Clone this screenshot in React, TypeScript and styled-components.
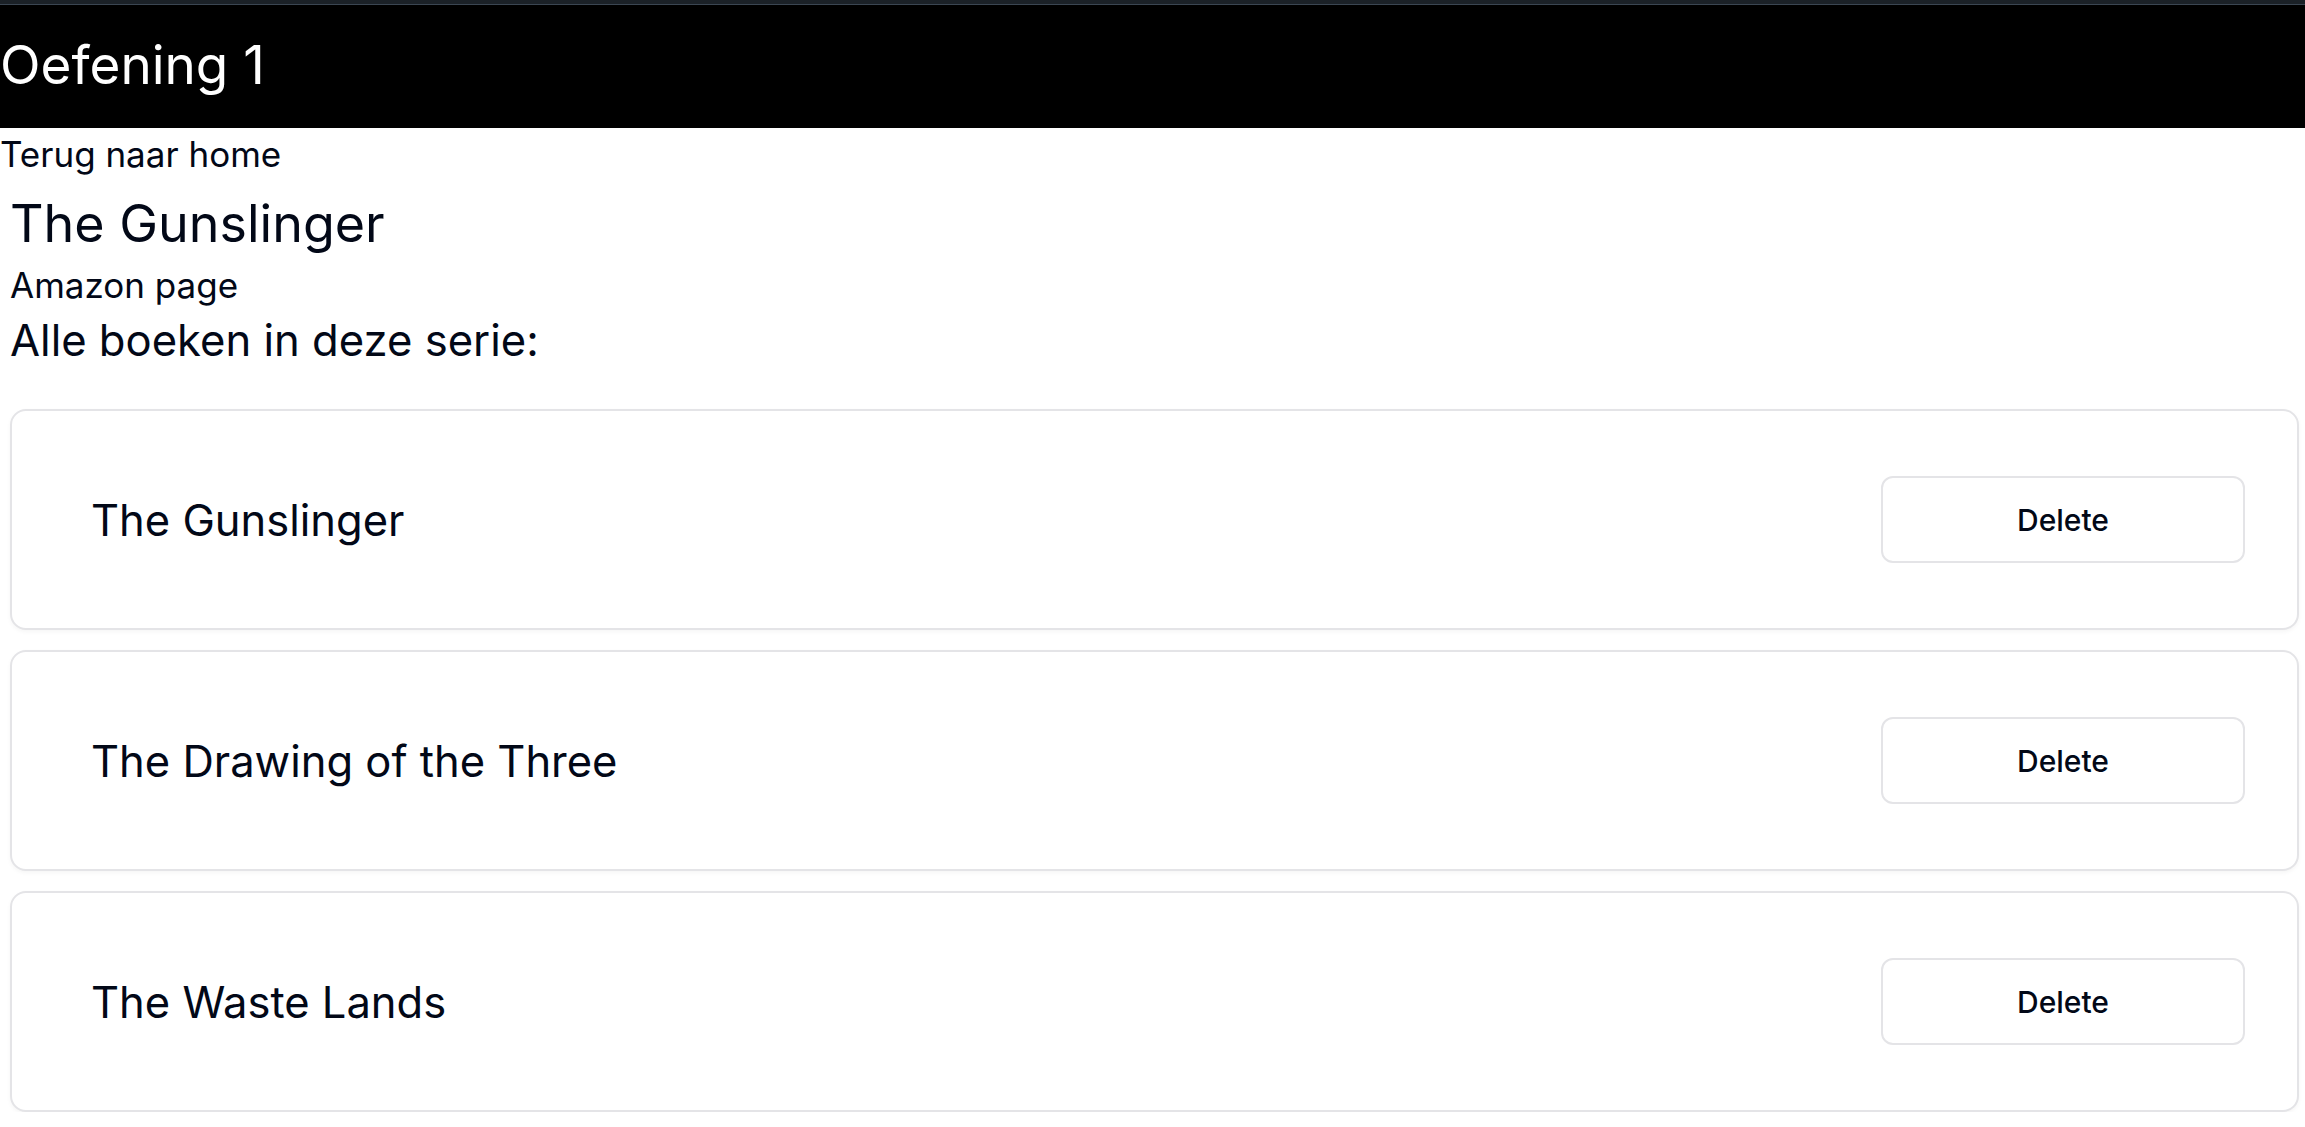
import React from 'react'
import styled, { createGlobalStyle } from 'styled-components'

const GlobalStyle = createGlobalStyle`
  html, body {
    margin: 0;
    padding: 0;
    background: #ffffff;
  }
  body {
    font-family: Inter, "Noto Sans", "Liberation Sans", sans-serif;
    color: #020817;
  }
  * {
    box-sizing: border-box;
  }
`

const TopStrip = styled.div`
  height: 5px;
  background: #1b2127;
  border-bottom: 1px solid #3b4652;
`

const Header = styled.header`
  height: 123px;
  background: #000000;
  display: flex;
  align-items: center;
`

const HeaderTitle = styled.h1`
  margin: 0;
  color: #ffffff;
  font-size: 53px;
  font-weight: 400;
  line-height: 1;
  padding-bottom: 2px;
`

const HomeLink = styled.a`
  display: block;
  font-size: 35px;
  line-height: 52px;
  color: #020817;
  text-decoration: none;
  cursor: pointer;
`

const Content = styled.main`
  padding: 0 6px 0 10px;
  display: flex;
  flex-direction: column;
`

const BookTitle = styled.h2`
  margin: 4px 0 0;
  font-size: 52px;
  font-weight: 400;
  line-height: 80px;
`

const AmazonLink = styled.a`
  font-size: 35px;
  line-height: 42px;
  color: #020817;
  text-decoration: none;
  cursor: pointer;
`

const SeriesHeading = styled.h3`
  margin: 0 0 33px;
  font-size: 43.6px;
  font-weight: 400;
  line-height: 70px;
`

const CardList = styled.div`
  display: flex;
  flex-direction: column;
  gap: 20px;
`

const Card = styled.div`
  height: 221px;
  border: 2px solid #e4e4e7;
  border-radius: 16px;
  background: #ffffff;
  box-shadow: 0 2px 4px rgba(0, 0, 0, 0.04);
  display: flex;
  align-items: center;
  justify-content: space-between;
  padding: 0 52px 0 79px;
`

const CardTitle = styled.span`
  font-size: 43.5px;
  font-weight: 400;
  color: #020817;
`

const DeleteButton = styled.button`
  width: 364px;
  height: 87px;
  border: 2px solid #e4e4e7;
  border-radius: 12px;
  background: #ffffff;
  font-family: Inter, "Noto Sans", "Liberation Sans", sans-serif;
  font-size: 30px;
  font-weight: 500;
  color: #020817;
  cursor: pointer;
`

const books = ['The Gunslinger', 'The Drawing of the Three', 'The Waste Lands']

const App = () => {
  return (
    <>
      <GlobalStyle />
      <TopStrip />
      <Header>
        <HeaderTitle>Oefening 1</HeaderTitle>
      </Header>
      <HomeLink>Terug naar home</HomeLink>
      <Content>
        <BookTitle>The Gunslinger</BookTitle>
        <AmazonLink>Amazon page</AmazonLink>
        <SeriesHeading>Alle boeken in deze serie:</SeriesHeading>
        <CardList>
          {books.map((title) => (
            <Card key={title}>
              <CardTitle>{title}</CardTitle>
              <DeleteButton>Delete</DeleteButton>
            </Card>
          ))}
        </CardList>
      </Content>
    </>
  )
}

export default App
